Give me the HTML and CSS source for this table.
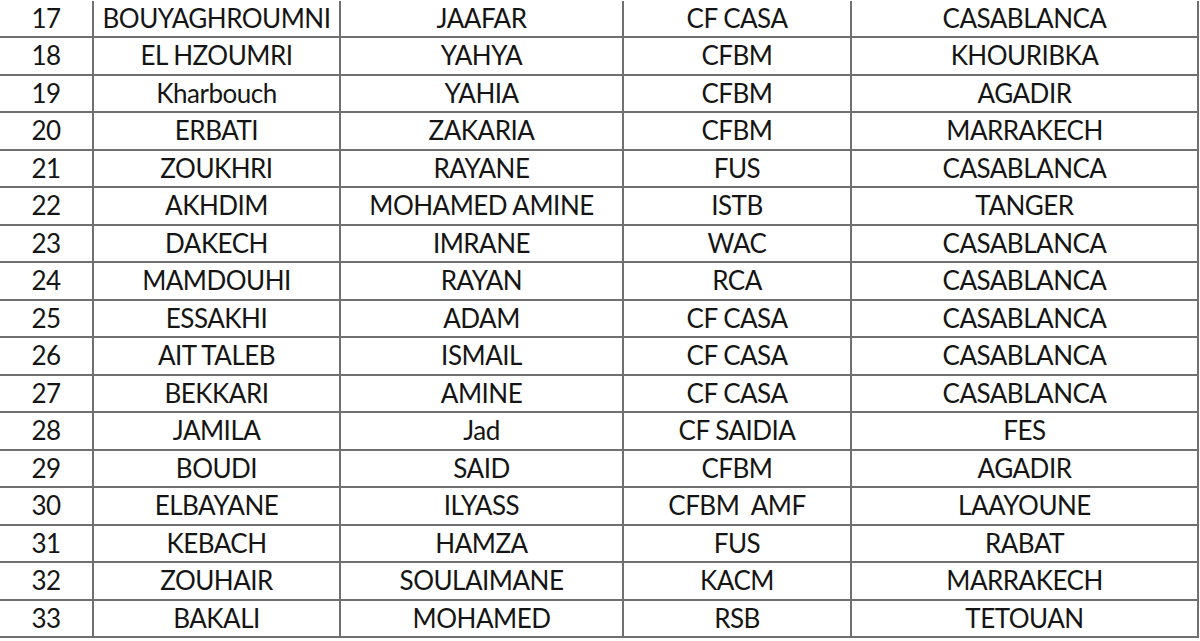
FILE: index.html
```html
<!DOCTYPE html>
<html>
<head>
<meta charset="utf-8">
<link rel="stylesheet" href="styles.css">
</head>
<body>
<div class="sheet">
<div class="c">17</div><div class="c">BOUYAGHROUMNI</div><div class="c">JAAFAR</div><div class="c">CF CASA</div><div class="c">CASABLANCA</div>
<div class="c">18</div><div class="c">EL HZOUMRI</div><div class="c">YAHYA</div><div class="c">CFBM</div><div class="c">KHOURIBKA</div>
<div class="c">19</div><div class="c">Kharbouch</div><div class="c">YAHIA</div><div class="c">CFBM</div><div class="c">AGADIR</div>
<div class="c">20</div><div class="c">ERBATI</div><div class="c">ZAKARIA</div><div class="c">CFBM</div><div class="c">MARRAKECH</div>
<div class="c">21</div><div class="c">ZOUKHRI</div><div class="c">RAYANE</div><div class="c">FUS</div><div class="c">CASABLANCA</div>
<div class="c">22</div><div class="c">AKHDIM</div><div class="c">MOHAMED AMINE</div><div class="c">ISTB</div><div class="c">TANGER</div>
<div class="c">23</div><div class="c">DAKECH</div><div class="c">IMRANE</div><div class="c">WAC</div><div class="c">CASABLANCA</div>
<div class="c">24</div><div class="c">MAMDOUHI</div><div class="c">RAYAN</div><div class="c">RCA</div><div class="c">CASABLANCA</div>
<div class="c">25</div><div class="c">ESSAKHI</div><div class="c">ADAM</div><div class="c">CF CASA</div><div class="c">CASABLANCA</div>
<div class="c">26</div><div class="c">AIT TALEB</div><div class="c">ISMAIL</div><div class="c">CF CASA</div><div class="c">CASABLANCA</div>
<div class="c">27</div><div class="c">BEKKARI</div><div class="c">AMINE</div><div class="c">CF CASA</div><div class="c">CASABLANCA</div>
<div class="c">28</div><div class="c">JAMILA</div><div class="c">Jad</div><div class="c">CF SAIDIA</div><div class="c">FES</div>
<div class="c">29</div><div class="c">BOUDI</div><div class="c">SAID</div><div class="c">CFBM</div><div class="c">AGADIR</div>
<div class="c">30</div><div class="c">ELBAYANE</div><div class="c">ILYASS</div><div class="c">CFBM&nbsp;&nbsp;AMF</div><div class="c">LAAYOUNE</div>
<div class="c">31</div><div class="c">KEBACH</div><div class="c">HAMZA</div><div class="c">FUS</div><div class="c">RABAT</div>
<div class="c">32</div><div class="c">ZOUHAIR</div><div class="c">SOULAIMANE</div><div class="c">KACM</div><div class="c">MARRAKECH</div>
<div class="c">33</div><div class="c">BAKALI</div><div class="c">MOHAMED</div><div class="c">RSB</div><div class="c">TETOUAN</div>
</div>
</body>
</html>
```

FILE: styles.css
```css
html, body {
  margin: 0;
  padding: 0;
  background: #ffffff;
}

.sheet {
  display: grid;
  grid-template-columns: 92px 245px 281px 226px 345px;
  grid-auto-rows: 35.5px;
  gap: 2px;
  width: 1197px;
  padding: 0 2px 2px 0;
  margin-top: 0.5px;
  background: #707070;
  font-family: Lato, "Open Sans", sans-serif;
  font-size: 26px;
  letter-spacing: -0.5px;
  color: #151515;
}

.c {
  background: #ffffff;
  text-align: center;
  line-height: 35.5px;
  white-space: nowrap;
  overflow: hidden;
}
```
